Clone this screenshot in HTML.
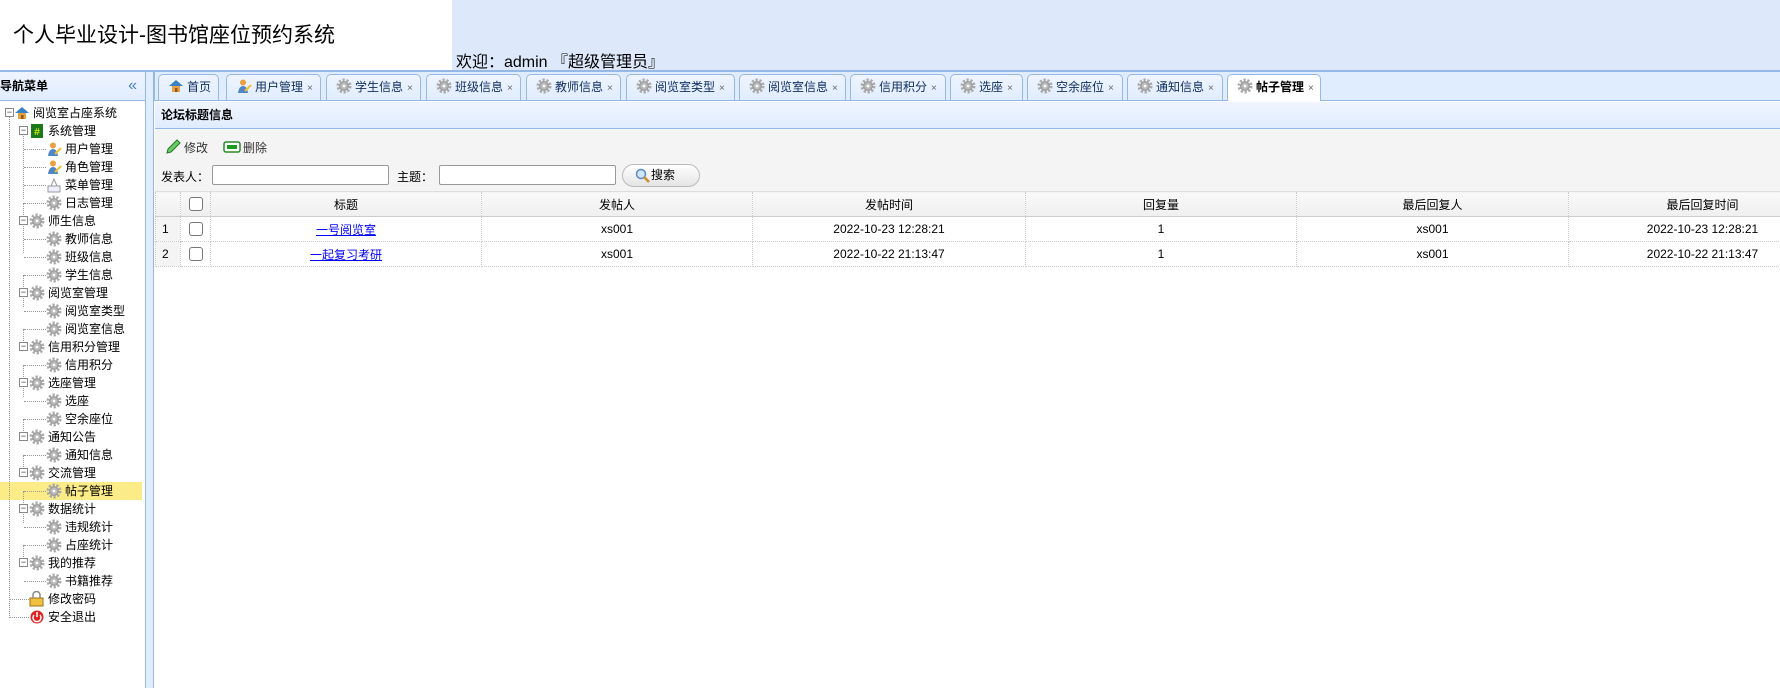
<!DOCTYPE html>
<html><head><meta charset="utf-8"><style>
*{box-sizing:border-box;margin:0;padding:0}
body{width:1780px;height:688px;overflow:hidden;background:#fff;font-family:"Liberation Sans","Noto Sans CJK SC",sans-serif;font-size:12px;color:#000;position:relative}
.abs{position:absolute}
#hdr{left:0;top:0;width:1780px;height:70px;background:#dde9fb}
#hdrw{left:0;top:0;width:452px;height:70px;background:#fff}
#title{left:13px;top:19px;font-size:21px;color:#000}
#wel{left:456px;top:48px;font-size:16px}
#left{left:0;top:70px;width:146px;height:618px;border-top:2px solid #95b8e7;border-right:1px solid #95b8e7}
#lh{height:29px;background:linear-gradient(#eff5ff,#e0ecff);border-bottom:1px solid #95b8e7;font-weight:bold;line-height:28px;padding-left:0;font-size:12px}
#lh span{position:absolute;right:8px;top:0;color:#4a7fc5;font-weight:normal;font-size:16px}
#div{left:146px;top:70px;width:8px;height:618px;background:#e0ecff;border-right:1px solid #95b8e7;border-top:2px solid #95b8e7}
#main{left:154px;top:70px;width:1626px;height:618px;border-top:2px solid #95b8e7;background:#fff}
#tabs{left:154px;top:72px;width:1626px;height:29px;background:#e0ecff;border-bottom:1px solid #95b8e7;border-left:1px solid #95b8e7}
.tab{position:absolute;top:2px;height:26px;border:1px solid #95b8e7;border-bottom:none;border-radius:5px 5px 0 0;background:linear-gradient(#eff5ff,#e0ecff);line-height:24px;font-size:12px;color:#0e2d5f;white-space:nowrap;padding-left:9px}
.tab.sel{background:#fff;height:27px;color:#000;font-weight:bold}
.tab svg{vertical-align:-3px;margin-right:3px}
.tab .x{color:#666;font-size:10px;margin-left:4px;font-weight:normal}
#ptitle{left:155px;top:102px;width:1625px;height:27px;background:linear-gradient(#eff5ff,#e0ecff);border-bottom:1px solid #95b8e7;font-weight:bold;line-height:26px;padding-left:6px}
#tool{left:155px;top:129px;width:1625px;height:62px;background:#f4f4f4}
.lbl{position:absolute;font-size:12px}
.inp{position:absolute;height:20px;border:1px solid #999;background:#fff;border-radius:2px}
#btn{left:622px;top:164px;width:78px;height:23px;border:1px solid #bbb;border-radius:12px;background:linear-gradient(#fff,#e4e4e4);line-height:21px;padding-left:28px}
#tw{position:absolute;left:155px;top:191px;width:1625px;height:80px;overflow:hidden}
table{width:1681px;border-collapse:collapse;table-layout:fixed}
td{height:25px;border:1px dotted #ccc;text-align:center;white-space:nowrap;overflow:hidden;font-size:12px}
tr.h td{background:linear-gradient(#f9f9f9,#efefef);border-bottom:1px solid #ccc;border-top:1px solid #ddd}
td.n{background:#f4f4f4;text-align:left;padding-left:6px}
.cb{display:inline-block;width:14px;height:14px;border:1px solid #777;border-radius:3px;background:#fff;vertical-align:middle}
a{color:#00f;text-decoration:underline}
.tr{position:absolute;height:18px;line-height:18px;font-size:12px;white-space:nowrap}
.tg{position:absolute;width:9px;height:9px;border:1px solid #888;font-size:9px;line-height:7px;text-align:center;color:#333;background:#fff}
.ic{position:absolute;width:16px;height:16px}
#selbg{left:0;top:482px;width:142px;height:18px;background:#fbec88}
</style></head><body>
<div id="hdr" class="abs"></div><div id="hdrw" class="abs"></div>
<div id="title" class="abs">个人毕业设计-图书馆座位预约系统</div>
<div id="wel" class="abs">欢迎：admin 『超级管理员』</div>
<div id="left" class="abs"><div id="lh">导航菜单<span>«</span></div></div>
<div id="div" class="abs"></div>
<div id="main" class="abs"></div>
<div id="selbg" class="abs"></div>
<svg width="0" height="0" style="position:absolute"><defs>
<radialGradient id="gg"><stop offset="0" stop-color="#eee"/><stop offset="1" stop-color="#999"/></radialGradient>
<symbol id="gear" viewBox="0 0 16 16"><circle cx="8" cy="8" r="6" fill="none" stroke="#aaa" stroke-width="3" stroke-dasharray="2.2 1.6"/><circle cx="8" cy="8" r="4.5" fill="url(#gg)" stroke="#999" stroke-width=".8"/><circle cx="8" cy="8" r="1.8" fill="#fff" stroke="#aaa" stroke-width=".6"/></symbol>
<symbol id="house" viewBox="0 0 16 16"><path d="M1 8 L8 2 L15 8 Z" fill="#3a82c8"/><rect x="4" y="8" width="8" height="6" fill="#e8a040"/><rect x="7" y="10" width="2.5" height="4" fill="#8a5a20"/></symbol>
<symbol id="user" viewBox="0 0 16 16"><circle cx="7" cy="4.5" r="3" fill="#e8a040"/><path d="M2 15 Q3 8 7 8 Q11 8 12 15Z" fill="#4f86c6"/><path d="M9 13 L15 7" stroke="#f0c030" stroke-width="2"/></symbol>
</defs></svg>

<div id="tabs" class="abs"></div>
<div class="tab abs" style="left:158px;top:74px;width:61px"><svg width="16" height="16"><use href="#house"/></svg>首页</div>
<div class="tab abs" style="left:226px;top:74px;width:95px"><svg width="16" height="16"><use href="#user"/></svg>用户管理<span class="x">×</span></div>
<div class="tab abs" style="left:326px;top:74px;width:95px"><svg width="16" height="16"><use href="#gear"/></svg>学生信息<span class="x">×</span></div>
<div class="tab abs" style="left:426px;top:74px;width:95px"><svg width="16" height="16"><use href="#gear"/></svg>班级信息<span class="x">×</span></div>
<div class="tab abs" style="left:526px;top:74px;width:95px"><svg width="16" height="16"><use href="#gear"/></svg>教师信息<span class="x">×</span></div>
<div class="tab abs" style="left:626px;top:74px;width:109px"><svg width="16" height="16"><use href="#gear"/></svg>阅览室类型<span class="x">×</span></div>
<div class="tab abs" style="left:739px;top:74px;width:107px"><svg width="16" height="16"><use href="#gear"/></svg>阅览室信息<span class="x">×</span></div>
<div class="tab abs" style="left:850px;top:74px;width:96px"><svg width="16" height="16"><use href="#gear"/></svg>信用积分<span class="x">×</span></div>
<div class="tab abs" style="left:950px;top:74px;width:73px"><svg width="16" height="16"><use href="#gear"/></svg>选座<span class="x">×</span></div>
<div class="tab abs" style="left:1027px;top:74px;width:96px"><svg width="16" height="16"><use href="#gear"/></svg>空余座位<span class="x">×</span></div>
<div class="tab abs" style="left:1127px;top:74px;width:96px"><svg width="16" height="16"><use href="#gear"/></svg>通知信息<span class="x">×</span></div>
<div class="tab abs sel" style="left:1227px;top:74px;width:94px"><svg width="16" height="16"><use href="#gear"/></svg>帖子管理<span class="x">×</span></div>

<div id="ptitle" class="abs">论坛标题信息</div>
<div id="tool" class="abs"></div>
<svg class="abs" style="left:165px;top:139px" width="16" height="16"><path d="M2 14 L3 10 L12 1 L15 4 L6 13 Z" fill="#6c6" stroke="#272" stroke-width="1"/></svg>
<div class="lbl" style="left:184px;top:139px;color:#333">修改</div>
<svg class="abs" style="left:223px;top:141px" width="18" height="12"><rect x="1" y="1" width="16" height="10" rx="2" fill="#fff" stroke="#2a8a2a" stroke-width="1.5"/><rect x="4" y="4" width="10" height="4" fill="#1a9a1a"/></svg>
<div class="lbl" style="left:243px;top:139px;color:#333">删除</div>
<div class="lbl" style="left:161px;top:168px">发表人：</div>
<div class="inp" style="left:212px;top:165px;width:177px"></div>
<div class="lbl" style="left:397px;top:168px">主题：</div>
<div class="inp" style="left:439px;top:165px;width:177px"></div>
<div id="btn" class="abs"><svg class="abs" style="left:12px;top:3px" width="16" height="16"><circle cx="6" cy="6" r="4.5" fill="#cfe6ff" stroke="#5a8ac8" stroke-width="1.5"/><path d="M9 9 L14 14" stroke="#c8902a" stroke-width="2.5"/></svg>搜索</div>

<div id="tw"><table>
<colgroup><col style="width:25px"><col style="width:30px"><col style="width:271px"><col style="width:271px"><col style="width:273px"><col style="width:271px"><col style="width:272px"><col style="width:268px"></colgroup>
<tr class="h"><td class="n" style="background:linear-gradient(#f9f9f9,#efefef)"></td><td><span class="cb"></span></td><td>标题</td><td>发帖人</td><td>发帖时间</td><td>回复量</td><td>最后回复人</td><td>最后回复时间</td></tr>
<tr><td class="n">1</td><td><span class="cb"></span></td><td><a>一号阅览室</a></td><td>xs001</td><td>2022-10-23 12:28:21</td><td>1</td><td>xs001</td><td>2022-10-23 12:28:21</td></tr>
<tr><td class="n">2</td><td><span class="cb"></span></td><td><a>一起复习考研</a></td><td>xs001</td><td>2022-10-22 21:13:47</td><td>1</td><td>xs001</td><td>2022-10-22 21:13:47</td></tr>
</table></div>

<div class="abs" style="left:9px;top:113px;width:0;height:505px;border-left:1px dotted #999"></div>
<div class="abs" style="left:23px;top:131px;width:0;height:68px;border-left:1px dotted #999"></div>
<div class="abs" style="left:23px;top:203px;width:0;height:50px;border-left:1px dotted #999"></div>
<div class="abs" style="left:23px;top:275px;width:0;height:32px;border-left:1px dotted #999"></div>
<div class="abs" style="left:23px;top:329px;width:0;height:14px;border-left:1px dotted #999"></div>
<div class="abs" style="left:23px;top:365px;width:0;height:32px;border-left:1px dotted #999"></div>
<div class="abs" style="left:23px;top:419px;width:0;height:14px;border-left:1px dotted #999"></div>
<div class="abs" style="left:23px;top:455px;width:0;height:14px;border-left:1px dotted #999"></div>
<div class="abs" style="left:23px;top:491px;width:0;height:32px;border-left:1px dotted #999"></div>
<div class="abs" style="left:23px;top:545px;width:0;height:14px;border-left:1px dotted #999"></div>

<div id="tree"></div>
<script>
var items=[[0,'阅览室占座系统','house'],[1,'系统管理','hash'],[2,'用户管理','user'],[2,'角色管理','user'],[2,'菜单管理','menu'],[2,'日志管理'],[1,'师生信息'],[2,'教师信息'],[2,'班级信息'],[2,'学生信息'],[1,'阅览室管理'],[2,'阅览室类型'],[2,'阅览室信息'],[1,'信用积分管理'],[2,'信用积分'],[1,'选座管理'],[2,'选座'],[2,'空余座位'],[1,'通知公告'],[2,'通知信息'],[1,'交流管理'],[2,'帖子管理'],[1,'数据统计'],[2,'违规统计'],[2,'占座统计'],[1,'我的推荐'],[2,'书籍推荐'],[1,'修改密码','lock'],[1,'安全退出','exit']];
var h='';
items.forEach(function(it,i){
 var y=104+i*18,l=it[0],ic=it[2]||'gear';
 var ix=[14,29,46][l],tx=[33,48,65][l];
 var tog=(l==0||(l==1&&ic!='lock'&&ic!='exit'));
 if(tog){var gx=l==0?5:19;h+='<div class="tg" style="left:'+gx+'px;top:'+(y+4)+'px">−</div>';}
 if(l==2||ic=='lock'||ic=='exit'){var lx=l==2?24:10;h+='<div class="abs" style="left:'+lx+'px;top:'+(y+9)+'px;width:'+(ix-lx)+'px;border-top:1px dotted #999"></div>';}
 var svg;
 if(ic=='hash')svg='<rect x="2" y="1" width="12" height="14" fill="#1a7a1a"/><text x="8" y="12" font-size="10" fill="#ff0" text-anchor="middle" font-family="Liberation Sans">#</text>';
 else if(ic=='lock')svg='<rect x="1" y="7" width="13" height="8" fill="#f0c040" stroke="#a07010"/><path d="M4 7 V4 A3.5 3.5 0 0 1 11 4 V7" fill="none" stroke="#888" stroke-width="1.5"/>';
 else if(ic=='exit')svg='<circle cx="8" cy="8" r="6.5" fill="#d22"/><path d="M5 6 A4 4 0 1 0 11 6" fill="none" stroke="#fff" stroke-width="1.5"/><path d="M8 3 V8" stroke="#fff" stroke-width="1.5"/>';
 else if(ic=='menu')svg='<rect x="2" y="9" width="12" height="6" fill="#eef" stroke="#999"/><path d="M5 9 L8 2 L11 9" fill="none" stroke="#999"/>';
 else svg='<use href="#'+ic+'"/>';
 h+='<svg class="ic" style="left:'+ix+'px;top:'+(y+1)+'px" viewBox="0 0 16 16">'+svg+'</svg>';
 h+='<div class="tr" style="left:'+tx+'px;top:'+y+'px">'+it[1]+'</div>';
});
document.getElementById('tree').innerHTML=h;
</script>
</body></html>
